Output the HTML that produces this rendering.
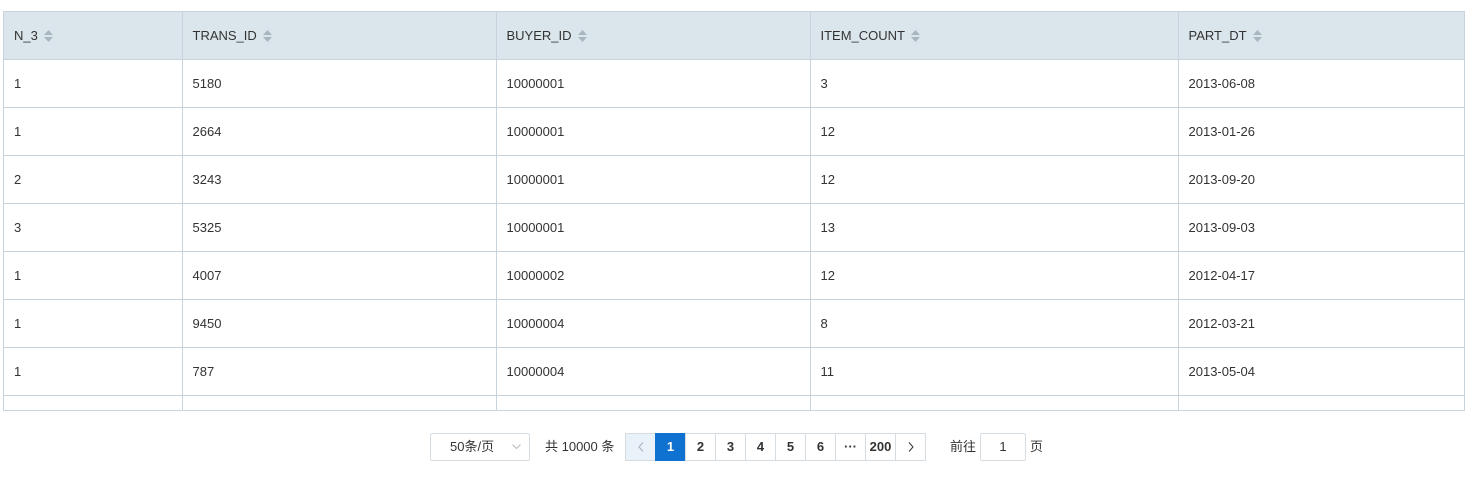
<!DOCTYPE html>
<html><head><meta charset="utf-8"><style>
*{box-sizing:border-box;margin:0;padding:0}
body{width:1475px;height:478px;background:#fff;font-family:"Liberation Sans","Noto Sans CJK SC",sans-serif;font-size:13px;color:#333;position:relative;overflow:hidden}
.tbl{position:absolute;left:3px;top:11px;width:1462px;height:400px;border:1px solid #c8d3dc;overflow:hidden}
table{border-collapse:collapse;table-layout:fixed;width:1462px}
td,th{height:48px;border-right:1px solid #c8d3dc;border-bottom:1px solid #c8d3dc;text-align:left;padding-left:10px;font-weight:normal;white-space:nowrap}
th{background:#dae6ec;color:#333;height:47px}
.s{display:inline-block;vertical-align:middle;margin-left:6px}
.pg{position:absolute;top:433px;height:28px;font-size:13px;color:#333}
.sel{left:430px;width:100px;border:1px solid #d5dde3;border-radius:2px;line-height:26px;padding-left:19px}
.b{position:absolute;top:433px;height:28px;width:31px;border:1px solid #d5dde3;text-align:center;line-height:26px;font-weight:bold;font-size:13px;color:#333;background:#fff}
</style></head><body>
<div class="tbl"><table>
<colgroup><col style="width:178px"><col style="width:314px"><col style="width:314px"><col style="width:368px"><col></colgroup>
<tr><th>N_3<svg class="s" width="9" height="12"><path d="M0 5L4.5 0 9 5z M0 7L4.5 12 9 7z" fill="#a9b6bf"/></svg></th><th>TRANS_ID<svg class="s" width="9" height="12"><path d="M0 5L4.5 0 9 5z M0 7L4.5 12 9 7z" fill="#a9b6bf"/></svg></th><th>BUYER_ID<svg class="s" width="9" height="12"><path d="M0 5L4.5 0 9 5z M0 7L4.5 12 9 7z" fill="#a9b6bf"/></svg></th><th>ITEM_COUNT<svg class="s" width="9" height="12"><path d="M0 5L4.5 0 9 5z M0 7L4.5 12 9 7z" fill="#a9b6bf"/></svg></th><th>PART_DT<svg class="s" width="9" height="12"><path d="M0 5L4.5 0 9 5z M0 7L4.5 12 9 7z" fill="#a9b6bf"/></svg></th></tr>
<tr><td>1</td><td>5180</td><td>10000001</td><td>3</td><td>2013-06-08</td></tr>
<tr><td>1</td><td>2664</td><td>10000001</td><td>12</td><td>2013-01-26</td></tr>
<tr><td>2</td><td>3243</td><td>10000001</td><td>12</td><td>2013-09-20</td></tr>
<tr><td>3</td><td>5325</td><td>10000001</td><td>13</td><td>2013-09-03</td></tr>
<tr><td>1</td><td>4007</td><td>10000002</td><td>12</td><td>2012-04-17</td></tr>
<tr><td>1</td><td>9450</td><td>10000004</td><td>8</td><td>2012-03-21</td></tr>
<tr><td>1</td><td>787</td><td>10000004</td><td>11</td><td>2013-05-04</td></tr>
<tr><td></td><td></td><td></td><td></td><td></td></tr>
</table></div>
<div class="pg sel">50条/页<svg style="position:absolute;right:8px;top:10px" width="9" height="6"><path d="M0.5 0.5L4.5 4.5 8.5 0.5" fill="none" stroke="#bbb"/></svg></div>
<div class="pg" style="left:545px;line-height:28px">共 10000 条</div>
<div class="b" style="left:625px;background:#e9f2f8"><svg width="6" height="10" style="margin-top:8px"><path d="M5 0.5L1 5 5 9.5" fill="none" stroke="#aab"/></svg></div>
<div class="b" style="left:655px;background:#0f72d1;border-color:#0f72d1;color:#fff">1</div>
<div class="b" style="left:685px">2</div>
<div class="b" style="left:715px">3</div>
<div class="b" style="left:745px">4</div>
<div class="b" style="left:775px">5</div>
<div class="b" style="left:805px">6</div>
<div class="b" style="left:835px">···</div>
<div class="b" style="left:865px">200</div>
<div class="b" style="left:895px"><svg width="6" height="10" style="margin-top:8px"><path d="M1 0.5L5 5 1 9.5" fill="none" stroke="#333"/></svg></div>
<div class="pg" style="left:950px;line-height:28px">前往</div>
<div class="pg" style="left:980px;width:46px;border:1px solid #d5dde3;border-radius:2px;text-align:center;line-height:26px">1</div>
<div class="pg" style="left:1030px;line-height:28px">页</div>
</body></html>
